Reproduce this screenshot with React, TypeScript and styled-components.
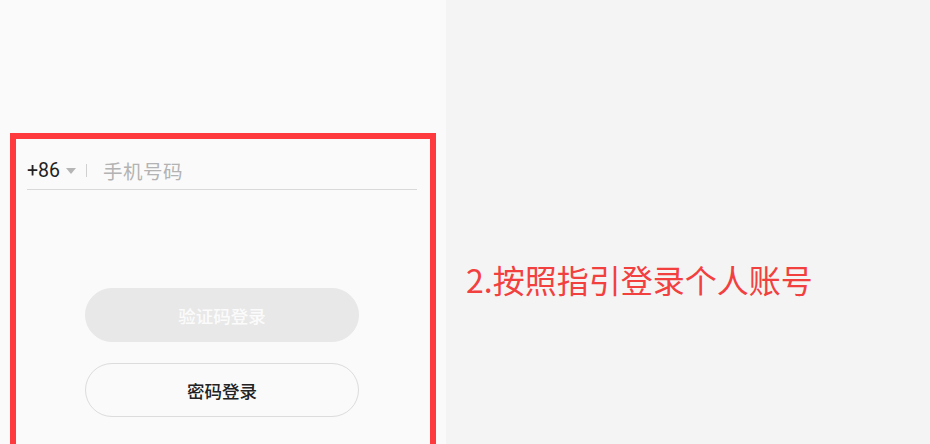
import styled, { createGlobalStyle } from 'styled-components'

const GlobalStyle = createGlobalStyle`
  html, body {
    margin: 0;
    padding: 0;
    height: 100%;
    overflow: hidden;
  }
  body {
    font-family: Roboto, "Noto Sans CJK SC", sans-serif;
  }
  #root {
    height: 100%;
  }
`

const Page = styled.div`
  display: flex;
  height: 444px;
  width: 930px;
`

const Phone = styled.div`
  width: 446px;
  background: #fafafa;
  padding: 133px 0 0 10px;
  box-sizing: border-box;
`

const Highlight = styled.div`
  width: 426px;
  height: 330px;
  box-sizing: border-box;
  border: 6px solid #ff3a3e;
  border-bottom: none;
  padding: 13px 13px 0 11px;
  display: flex;
  flex-direction: column;
`

const InputRow = styled.div`
  display: flex;
  align-items: center;
  height: 37px;
  border-bottom: 1px solid #d9d9d9;
`

const Code = styled.span`
  font-size: 19.5px;
  color: #222;
`

const Caret = styled.span`
  width: 0;
  height: 0;
  margin-left: 6px;
  border-left: 5px solid transparent;
  border-right: 5px solid transparent;
  border-top: 6px solid #b5b5b5;
`

const Divider = styled.span`
  width: 1px;
  height: 13px;
  background: #d0d0d0;
  margin: 0 16px 0 10px;
`

const Placeholder = styled.span`
  font-family: "Noto Sans CJK SC", sans-serif;
  font-size: 19.5px;
  color: #b3b3b3;
  letter-spacing: 0.5px;
`

const Buttons = styled.div`
  display: flex;
  flex-direction: column;
  gap: 21px;
  margin: 98px 0 0 58px;
`

const Button = styled.div<{ $primary?: boolean }>`
  width: 274px;
  height: 54px;
  box-sizing: border-box;
  border-radius: 27px;
  display: flex;
  align-items: center;
  justify-content: center;
  font-family: "Noto Sans CJK SC", sans-serif;
  font-size: 17.5px;
  font-weight: 500;
  background: ${({ $primary }) => ($primary ? '#e8e8e8' : '#fafafa')};
  color: ${({ $primary }) => ($primary ? '#fbfbfb' : '#222')};
  border: 1px solid ${({ $primary }) => ($primary ? '#e8e8e8' : '#dcdcdc')};
`

const Side = styled.div`
  flex: 1;
  background: #f4f4f4;
  display: flex;
  align-items: center;
  padding: 114px 0 0 20px;
`

const Caption = styled.div`
  font-family: "Noto Sans CJK SC", sans-serif;
  font-size: 32px;
  color: #f2403f;
`

export default function App() {
  return (
    <Page>
      <GlobalStyle />
      <Phone>
        <Highlight>
          <InputRow>
            <Code>+86</Code>
            <Caret />
            <Divider />
            <Placeholder>手机号码</Placeholder>
          </InputRow>
          <Buttons>
            <Button $primary>验证码登录</Button>
            <Button>密码登录</Button>
          </Buttons>
        </Highlight>
      </Phone>
      <Side>
        <Caption>2.按照指引登录个人账号</Caption>
      </Side>
    </Page>
  )
}
